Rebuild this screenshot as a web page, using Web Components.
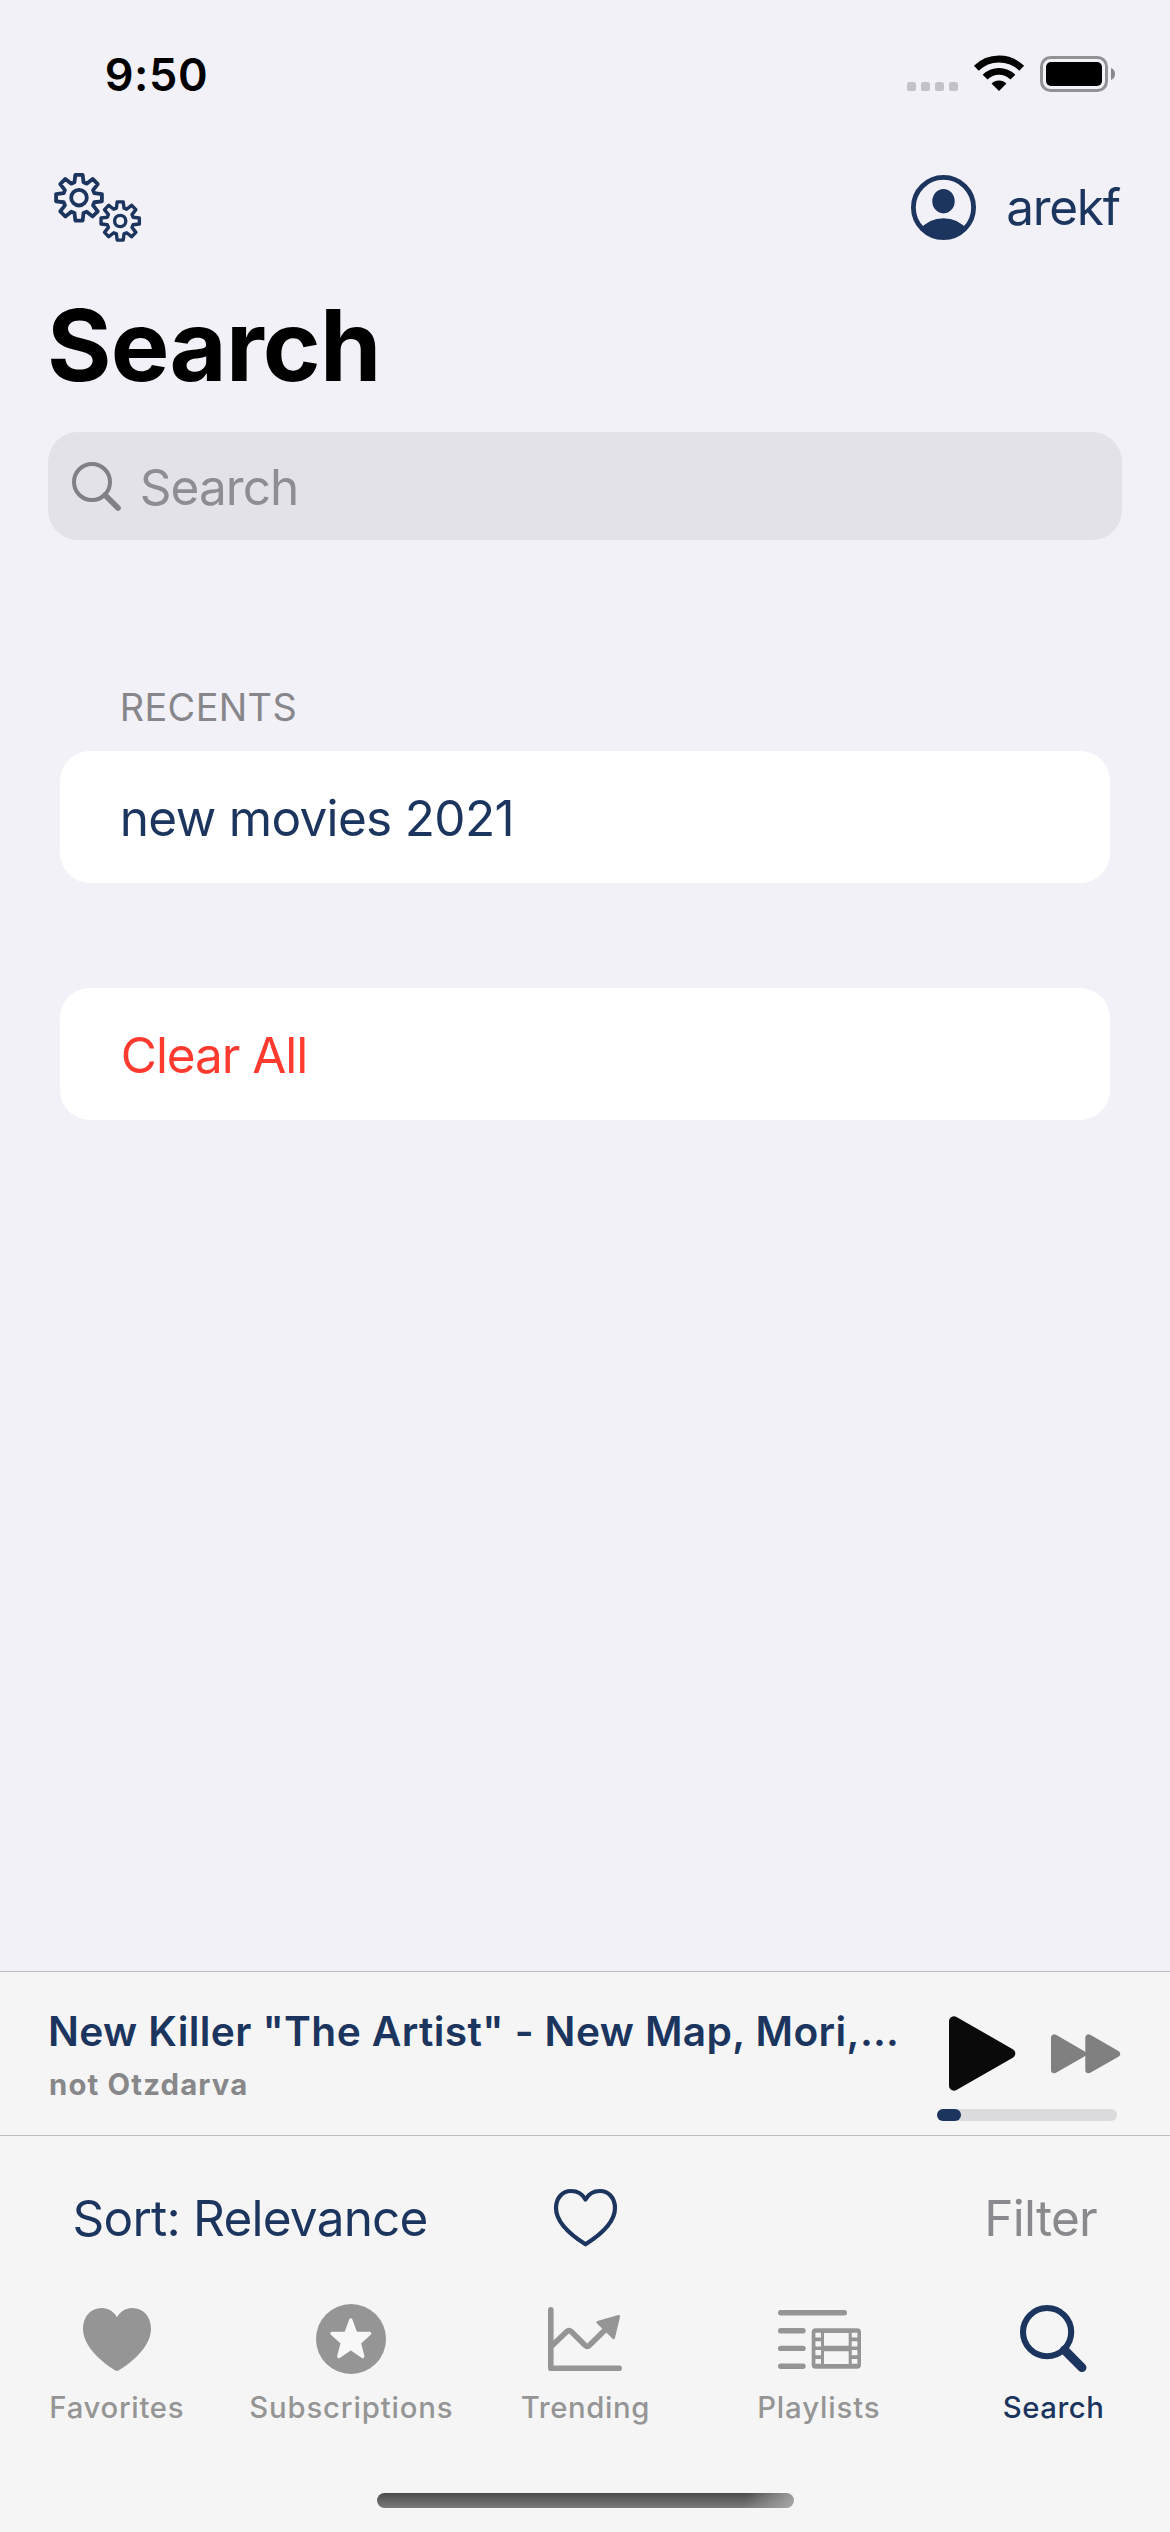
<!DOCTYPE html>
<html lang="en">
<head>
<meta charset="utf-8">
<title>Search</title>
<style>
html,body{margin:0;background:#f2f1f7}
body{width:1170px;height:2532px;overflow:hidden;font-family:Inter,"Liberation Sans",sans-serif;color:#1c355e}
</style>
</head>
<body>
<search-app></search-app>
<script>
const NAVY = '#1c355e', GRAY = '#959595';

// Text label: caps sit in the middle of the box, tracking fills the given ink width.
class UiLabel extends HTMLElement {
  connectedCallback() {
    const size = +this.getAttribute('size'), width = +this.getAttribute('width');
    const weight = this.getAttribute('weight') || 400;
    const text = this.textContent;
    const ctx = document.createElement('canvas').getContext('2d');
    ctx.font = `${weight} ${size}px Inter, "Liberation Sans", sans-serif`;
    const m = ctx.measureText(text);
    const ink = m.actualBoundingBoxLeft + m.actualBoundingBoxRight;
    const tracking = (width - ink) / (text.length - 1);
    this.attachShadow({mode: 'open'}).innerHTML = `<style>
      :host{display:block;flex:none;width:${width}px;height:60px;line-height:60px;font-size:${size}px;font-weight:${weight};white-space:nowrap}
      span{display:block;width:max-content;margin-left:${m.actualBoundingBoxLeft}px;letter-spacing:${tracking}px}
    </style><span><slot></slot></span>`;
  }
}
customElements.define('ui-label', UiLabel);

function gear(cx, cy, tip, root, hole, stroke) {
  const pts = [];
  for (let i = 0; i < 8; i++) {
    for (const [r, a] of [[root, -16.5], [tip, -9], [tip, 9], [root, 16.5]]) {
      const t = (i * 45 + a) * Math.PI / 180;
      pts.push((cx + r * Math.cos(t)).toFixed(2) + ',' + (cy + r * Math.sin(t)).toFixed(2));
    }
  }
  return `<g fill="none" stroke="${NAVY}" stroke-width="${stroke}" stroke-linejoin="round"><polygon points="${pts.join(' ')}"/><circle cx="${cx}" cy="${cy}" r="${hole}"/></g>`;
}

const ICONS = {
  gears: [88, 70, gear(25, 24.7, 23.2, 16, 7.8, 3.8) + gear(66.2, 48, 19.4, 13.4, 5.6, 3.4)],
  dots: [51, 9, `<g fill="#c3c2c7"><rect width="9" height="9" rx="2.6"/><rect x="14" width="9" height="9" rx="2.6"/><rect x="28" width="9" height="9" rx="2.6"/><rect x="42" width="9" height="9" rx="2.6"/></g>`],
  wifi: [48, 36, `<g fill="none" stroke="#000" stroke-width="6.9"><path d="M1.3 13.3A32.2 32.2 0 0 1 46.7 13.3"/><path d="M10.1 22.1A19.7 19.7 0 0 1 37.9 22.1"/></g><path d="M24 36L16.5 28.5A10.6 10.6 0 0 1 31.5 28.5Z"/>`],
  battery: [75, 36, `<rect x="1.5" y="1.5" width="65" height="33" rx="9" fill="none" stroke="#929196" stroke-width="3"/><rect x="6" y="6" width="56" height="24" rx="5"/><path d="M71 12Q75 13.5 75 18T71 24Z" fill="#87868b"/>`],
  person: [65, 65, `<clipPath id="c"><circle cx="32.5" cy="32.5" r="31"/></clipPath><circle cx="32.5" cy="32.5" r="30.1" fill="none" stroke="${NAVY}" stroke-width="4.8"/><ellipse cx="32.5" cy="26.2" rx="11.2" ry="12.2" fill="${NAVY}"/><path clip-path="url(#c)" d="M9 54.5Q18 43.3 32.5 43.3T56 54.5V66H9Z" fill="${NAVY}"/>`],
  lens: [49, 49, `<g fill="none" stroke="#808085"><circle cx="20" cy="20" r="18" stroke-width="4"/><path d="M33 33L46 46" stroke-width="5.6" stroke-linecap="round"/></g>`],
  play: [67, 75, `<path d="M5 5.3V69.7L61.3 37.5Z" fill="#0a0a0a" stroke="#0a0a0a" stroke-width="10" stroke-linejoin="round"/>`],
  forward: [70, 40, `<path d="M3.3 3.6V36L31.3 19.8ZM37.6 3.6V36L65.8 19.8Z" fill="#808080" stroke="#808080" stroke-width="6.6" stroke-linejoin="round"/>`],
  heartLine: [63, 58, `<path d="M31.5 55.3C22 49.3 2 35.5 2 19C2 9 8.5 2 17 2C23.5 2 28.5 5 31.5 10.5C34.5 5 39.5 2 46 2C54.5 2 61 9 61 19C61 35.5 41 49.3 31.5 55.3Z" fill="none" stroke="${NAVY}" stroke-width="4.2" stroke-linejoin="round"/>`],
  heart: [68, 63, `<path d="M34 63C31 62.5 0 43 0 21C0 8.5 7.8 0 18.8 0C25.5 0 31 3.7 34 9.3C37 3.7 42.5 0 49.2 0C60.2 0 68 8.5 68 21C68 43 37 62.5 34 63Z" fill="${GRAY}"/>`],
  star: [70, 70, `<circle cx="35" cy="35" r="35" fill="${GRAY}"/><path d="M34.8 16L39.6 29.2L53.6 29.4L43.3 38.8L46.8 52.5L34.8 44.3L22.8 52.5L26.3 38.8L16 29.4L30 29.2Z" fill="#f8f8f8" stroke="#f8f8f8" stroke-width="3.4" stroke-linejoin="round"/>`],
  trend: [74, 64, `<g fill="none" stroke="${GRAY}" stroke-width="5.6" stroke-linecap="round" stroke-linejoin="round"><path d="M2.8 2.8V61.2H71.2"/><path stroke-linecap="butt" d="M3.5 39.3L18.8 24.6Q21 22.6 23.2 24.6L37 38.3Q39.3 40.4 41.5 38.3L58 22"/></g><path d="M49.8 15.3L70.7 9.4L65.6 30.8Z" fill="${GRAY}" stroke="${GRAY}" stroke-width="2.8" stroke-linejoin="round"/>`],
  film: [83, 59, `<g stroke="${GRAY}" stroke-width="5.4" stroke-linecap="round"><path d="M2.7 2.7H66.3M2.7 20.7H25M2.7 38.4H25M2.7 56.2H25"/></g><path fill="${GRAY}" fill-rule="evenodd" d="M37.7 18.3H79Q83 18.3 83 22.3V54.7Q83 58.7 79 58.7H37.7Q33.7 58.7 33.7 54.7V22.3Q33.7 18.3 37.7 18.3ZM46 23V35.8H70.7V23ZM46 41.2V54H70.7V41.2ZM37.4 22.8V27.6H43V22.8ZM37.4 31.2V36.4H43V31.2ZM37.4 40V45.2H43V40ZM37.4 49V53.8H43V49ZM73.7 22.8V27.6H79.4V22.8ZM73.7 31.2V36.4H79.4V31.2ZM73.7 40V45.2H79.4V40ZM73.7 49V53.8H79.4V49Z"/>`],
  search: [67, 68, `<g fill="none" stroke="${NAVY}"><circle cx="27.1" cy="27.1" r="24.1" stroke-width="6.1"/><path d="M44.5 45L62 62.6" stroke-width="9" stroke-linecap="round"/></g>`]
};

class UiIcon extends HTMLElement {
  connectedCallback() {
    const [w, h, body] = ICONS[this.getAttribute('name')];
    this.attachShadow({mode: 'open'}).innerHTML = `<style>:host{display:block;flex:none;width:${w}px;height:${h}px}svg{display:block;overflow:visible}</style><svg width="${w}" height="${h}" viewBox="0 0 ${w} ${h}">${body}</svg>`;
  }
}
customElements.define('ui-icon', UiIcon);

function define(name, html) {
  const tpl = document.createElement('template');
  tpl.innerHTML = html;
  customElements.define(name, class extends HTMLElement {
    constructor() {
      super();
      this.attachShadow({mode: 'open'}).append(tpl.content.cloneNode(true));
    }
  });
}

define('status-bar', `<style>
:host{display:flex;height:150px;box-sizing:border-box;padding:45px 55px 0 106.7px;align-items:flex-start;color:#000}
.time{flex:1}
.dots{margin:37px 17px 0 0}.wifi{margin:10px 17px 0 0}.bat{margin-top:11px}
</style><div class="time"><ui-label size="45" weight="600" width="99.3">9:50</ui-label></div>
<ui-icon class="dots" name="dots"></ui-icon><ui-icon class="wifi" name="wifi"></ui-icon><ui-icon class="bat" name="battery"></ui-icon>`);

define('nav-bar', `<style>
:host{display:flex;height:132px;box-sizing:border-box;padding:0 49.3px 0 54px;align-items:flex-start}
.gears{margin:23px auto 0 0}.person{margin:25px 32.3px 0 0}ui-label{margin-top:27px}
</style><ui-icon class="gears" name="gears"></ui-icon><ui-icon class="person" name="person"></ui-icon><ui-label size="49.5" width="112.4">arekf</ui-label>`);

define('page-title', `<style>:host{display:block;height:150px;box-sizing:border-box;padding:34px 0 0 51px;color:#000}</style>
<ui-label size="98.5" weight="700" width="325">Search</ui-label>`);

define('search-field', `<style>:host{display:flex;align-items:center;gap:20.7px;height:108px;margin:0 48px;box-sizing:border-box;padding:0 24px;border-radius:30px;background:#e3e2e8;color:#8e8d93}
ui-label{margin-top:2px}</style>
<ui-icon name="lens"></ui-icon><ui-label size="49.5" width="154.3">Search</ui-label>`);

define('list-card', `<style>:host{display:flex;align-items:center;height:132px;margin:0 60px;box-sizing:border-box;padding:1.4px 0 0 62.8px;border-radius:30px;background:#fff}</style><slot></slot>`);

define('mini-player', `<style>
:host{display:flex;height:163px;border-top:1px solid #bebebe;border-bottom:1px solid #bebebe;background:#f5f5f5;padding-left:50px}
.info{width:887px;padding-top:30px}
.by{margin-top:-7px;color:#88888b}
.controls{width:184px}
.buttons{display:flex;align-items:center;justify-content:space-between;height:75px;padding:44px 0 0 12px}
.track{width:180px;height:12px;margin-top:18px;border-radius:6px;background:#dbdbdd}
.track div{width:24px;height:12px;border-radius:6px;background:#1c355e}
</style><div class="info"><ui-label size="40.7" weight="600" width="846.8">New Killer "The Artist" - New Map, Mori,…</ui-label>
<ui-label class="by" size="29.3" weight="700" width="196.3">not Otzdarva</ui-label></div>
<div class="controls"><div class="buttons"><ui-icon name="play"></ui-icon><ui-icon name="forward"></ui-icon></div><div class="track"><div></div></div></div>`);

define('tool-bar', `<style>:host{display:grid;grid-template-columns:1fr 63px 1fr;height:168px;box-sizing:border-box;padding:52px 73px 0 74.6px;background:#f5f5f5}
.filter{justify-self:end;color:#8a8a8e}.fav{margin-left:-.8px;margin-top:1px}</style>
<ui-label size="49.5" width="352">Sort: Relevance</ui-label><ui-icon class="fav" name="heartLine"></ui-icon><ui-label class="filter" size="49.5" width="108.7">Filter</ui-label>`);

define('tab-item', `<style>:host{display:flex;flex-direction:column;align-items:center;flex:1;color:#959595}
:host([active]){color:#1c355e}
.pic{display:flex;height:70px;align-items:center;margin-bottom:4px}</style><div class="pic"><slot name="icon"></slot></div><slot></slot>`);

define('tab-bar', `<style>:host{display:flex;height:189px;background:#f5f5f5}</style>
<tab-item><ui-icon slot="icon" name="heart"></ui-icon><ui-label size="29.3" weight="500" width="131.4">Favorites</ui-label></tab-item>
<tab-item><ui-icon slot="icon" name="star"></ui-icon><ui-label size="29.3" weight="500" width="201.7">Subscriptions</ui-label></tab-item>
<tab-item><ui-icon slot="icon" name="trend"></ui-icon><ui-label size="29.3" weight="500" width="126.7">Trending</ui-label></tab-item>
<tab-item><ui-icon slot="icon" name="film"></ui-icon><ui-label size="29.3" weight="500" width="119.7">Playlists</ui-label></tab-item>
<tab-item active><ui-icon slot="icon" name="search"></ui-icon><ui-label size="29.3" weight="500" width="98.6">Search</ui-label></tab-item>`);

define('home-indicator', `<style>:host{display:block;height:39px;background:#f5f5f5}
div{width:417px;height:15px;margin-left:377px;border-radius:7.5px;background:linear-gradient(100deg,transparent 88%,#b4b4b4cc 100%),linear-gradient(#4c4c4c,#7a7a7a)}</style><div></div>`);

define('search-app', `<style>
:host{display:flex;flex-direction:column;width:1170px;height:2532px;background:#f2f1f7}
.head{margin:137px 0 14px 122.8px;color:#87868b}
.second{margin-top:105px}.danger{color:#ff3b30}
.space{flex:1}
</style><status-bar></status-bar><nav-bar></nav-bar><page-title></page-title><search-field></search-field>
<ui-label class="head" size="37.8" width="172.6">RECENTS</ui-label>
<list-card><ui-label size="49.5" width="387.6">new movies 2021</ui-label></list-card>
<list-card class="second danger"><ui-label size="49.5" width="182.4">Clear All</ui-label></list-card>
<div class="space"></div><mini-player></mini-player><tool-bar></tool-bar><tab-bar></tab-bar><home-indicator></home-indicator>`);
</script>
</body>
</html>
